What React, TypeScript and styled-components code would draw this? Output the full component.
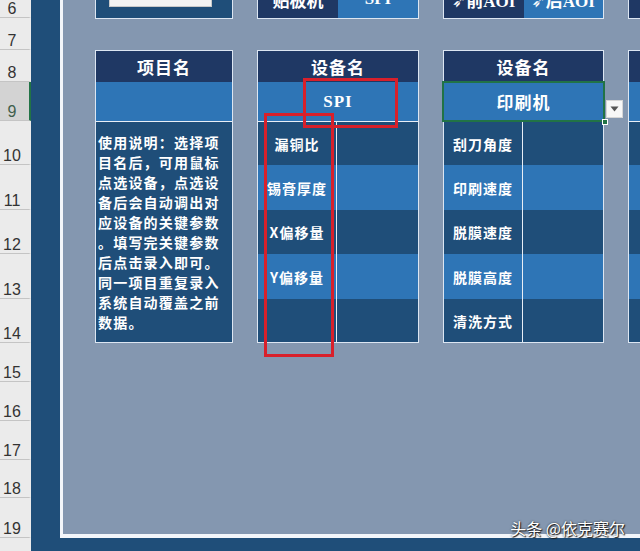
import styled, { createGlobalStyle } from 'styled-components'

const GlobalStyle = createGlobalStyle`
  html, body {
    margin: 0;
    padding: 0;
    width: 640px;
    height: 551px;
    overflow: hidden;
    background: #1f4e79;
  }
  body {
    font-family: "Noto Sans CJK SC", "Noto Sans", sans-serif;
  }
`

const rows = [
  { n: 6, h: 18 },
  { n: 7, h: 32 },
  { n: 8, h: 32 },
  { n: 9, h: 39 },
  { n: 10, h: 44 },
  { n: 11, h: 45 },
  { n: 12, h: 44 },
  { n: 13, h: 45 },
  { n: 14, h: 44 },
  { n: 15, h: 39 },
  { n: 16, h: 39 },
  { n: 17, h: 39 },
  { n: 18, h: 38 },
  { n: 19, h: 40 },
  { n: 20, h: 70 },
]

const guide = [
  '使用说明：选择项',
  '目名后，可用鼠标',
  '点选设备，点选设',
  '备后会自动调出对',
  '应设备的关键参数',
  '。填写完关键参数',
  '后点击录入即可。',
  '同一项目重复录入',
  '系统自动覆盖之前',
  '数据。',
]

const spiParams = ['漏铜比', '锡膏厚度', 'X偏移量', 'Y偏移量', '']
const printerParams = ['刮刀角度', '印刷速度', '脱膜速度', '脱膜高度', '清洗方式']
const paramRowHeights = [43, 45, 44, 45, 43]

export default function App() {
  return (
    <Page>
      <GlobalStyle />
      <RowHeaders>
        {rows.map((r) => (
          <RowHead key={r.n} $h={r.h} $active={r.n === 9}>
            {r.n === 20 ? '' : r.n}
          </RowHead>
        ))}
      </RowHeaders>

      <Sheet>
        <Frame>
          <TopRow>
            <TopPanel $w={138}>
              <InputBox />
            </TopPanel>
            <TopPanel $w={162}>
              <TopCell $tone="navy">贴板机</TopCell>
              <TopCell $tone="mid">SPI</TopCell>
            </TopPanel>
            <TopPanel $w={161}>
              <TopCell $tone="navy">➶前AOI</TopCell>
              <TopCell $tone="mid">➶后AOI</TopCell>
            </TopPanel>
            <TopPanel $w={161}>
              <TopCell $tone="navy" />
              <TopCell $tone="mid" />
            </TopPanel>
          </TopRow>

          <MainRow>
            <Panel $w={138}>
              <PanelHead>项目名</PanelHead>
              <SelectCell />
              <GuideBody>
                {guide.map((line) => (
                  <GuideLine key={line}>{line}</GuideLine>
                ))}
              </GuideBody>
            </Panel>

            <Panel $w={162}>
              <PanelHead>设备名</PanelHead>
              <SelectCell>SPI</SelectCell>
              <ParamBody>
                {spiParams.map((p, i) => (
                  <ParamRow key={i} $h={paramRowHeights[i]} $alt={i % 2 === 1}>
                    <ParamLabel $align="center">{p}</ParamLabel>
                    <ParamValue />
                  </ParamRow>
                ))}
              </ParamBody>
            </Panel>

            <Panel $w={161}>
              <PanelHead>设备名</PanelHead>
              <SelectCell $selected>
                印刷机
                <FillHandle />
                <DropButton>
                  <svg width="9" height="6" viewBox="0 0 9 6">
                    <path d="M0.5 0.5 L8.5 0.5 L4.5 5.5 Z" fill="#555" />
                  </svg>
                </DropButton>
              </SelectCell>
              <ParamBody>
                {printerParams.map((p, i) => (
                  <ParamRow key={p} $h={paramRowHeights[i]} $alt={i % 2 === 1}>
                    <ParamLabel $align="left">{p}</ParamLabel>
                    <ParamValue />
                  </ParamRow>
                ))}
              </ParamBody>
            </Panel>

            <Panel $w={161}>
              <PanelHead />
              <SelectCell />
              <ParamBody>
                {paramRowHeights.map((h, i) => (
                  <ParamRow key={i} $h={h} $alt={i % 2 === 1}>
                    <ParamLabel $align="left" />
                    <ParamValue />
                  </ParamRow>
                ))}
              </ParamBody>
            </Panel>
          </MainRow>
        </Frame>
      </Sheet>

      <Mark $x={303} $y={78} $w={95} $h={50} />
      <Mark $x={264} $y={113} $w={70} $h={244} />
      <Watermark>头条 @依克赛尔</Watermark>
    </Page>
  )
}

const Page = styled.div`
  position: relative;
  display: flex;
  width: 640px;
  height: 551px;
  overflow: hidden;
`

// Excel row headers
const RowHeaders = styled.div`
  width: 31px;
  flex-shrink: 0;
  background: #ebebeb;
  display: flex;
  flex-direction: column;
`

const RowHead = styled.div<{ $h: number; $active?: boolean }>`
  box-sizing: border-box;
  height: ${(p) => p.$h}px;
  flex-shrink: 0;
  display: flex;
  align-items: flex-end;
  justify-content: center;
  padding-right: 5px;
  border-bottom: 1px solid #c4c4c4;
  border-right: 2px solid ${(p) => (p.$active ? '#217346' : '#ebebeb')};
  background: ${(p) => (p.$active ? '#d3d3d3' : '#ebebeb')};
  color: ${(p) => (p.$active ? '#3f5f4c' : '#333')};
  font-family: "Liberation Sans", Arial, sans-serif;
  font-size: 16px;
  line-height: 17px;
`

const Sheet = styled.div`
  flex: 1;
  display: flex;
  flex-direction: column;
  padding: 0 0 13px 29px;
  background: #1f4e79;
`

const Frame = styled.div`
  flex: 1;
  margin-top: -21px;
  padding-left: 32px;
  background: #8497b0;
  border-left: 3px solid #f3f6fa;
  border-bottom: 4px solid #f3f6fa;
  display: flex;
  flex-direction: column;
`

// top strip (row 6, mostly scrolled away)
const TopRow = styled.div`
  display: flex;
  gap: 24px;
  height: 40px;
  flex-shrink: 0;
`

const TopPanel = styled.div<{ $w: number }>`
  box-sizing: border-box;
  width: ${(p) => p.$w}px;
  flex-shrink: 0;
  display: flex;
  background: #1f4e79;
  border: 1px solid #dce6f2;
`

const InputBox = styled.div`
  width: 103px;
  height: 18px;
  margin: 0 0 11px 13px;
  align-self: flex-end;
  box-sizing: border-box;
  background: #f3f3f3;
  border: 1px solid #c9c9c9;
`

const TopCell = styled.div<{ $tone: 'navy' | 'mid' }>`
  flex: 1;
  display: flex;
  align-items: center;
  justify-content: center;
  background: ${(p) => (p.$tone === 'navy' ? '#1f3864' : '#2e75b6')};
  color: #fff;
  font-family: "Liberation Serif", "Noto Sans CJK SC", "DejaVu Sans", serif;
  font-weight: bold;
  font-size: 17px;
  white-space: nowrap;
`

// main panels (rows 8-14)
const MainRow = styled.div`
  display: flex;
  gap: 24px;
  margin-top: 31px;
`

const Panel = styled.div<{ $w: number }>`
  box-sizing: border-box;
  width: ${(p) => p.$w}px;
  height: 293px;
  flex-shrink: 0;
  display: flex;
  flex-direction: column;
  border: 1px solid #dce6f2;
  background: #1f4e79;
`

const PanelHead = styled.div`
  height: 31px;
  flex-shrink: 0;
  display: flex;
  align-items: center;
  justify-content: center;
  background: #1f3864;
  color: #fff;
  font-family: "Liberation Serif", "Noto Sans CJK SC", serif;
  font-weight: bold;
  font-size: 17px;
  letter-spacing: 1px;
`

const SelectCell = styled.div<{ $selected?: boolean }>`
  position: relative;
  box-sizing: border-box;
  height: 39px;
  flex-shrink: 0;
  display: flex;
  align-items: center;
  justify-content: center;
  background: #2e75b6;
  color: #fff;
  font-family: "Liberation Serif", "Noto Sans CJK SC", serif;
  font-weight: bold;
  font-size: 17px;
  letter-spacing: 1px;
  outline: ${(p) => (p.$selected ? '2px solid #217346' : 'none')};
  outline-offset: -1px;
  margin: ${(p) => (p.$selected ? '0 -1px' : '0')};
`

const FillHandle = styled.span`
  position: absolute;
  right: -4px;
  bottom: -4px;
  width: 6px;
  height: 6px;
  background: #217346;
  border: 1px solid #fff;
  box-sizing: border-box;
`

const DropButton = styled.span`
  position: absolute;
  left: calc(100% + 2px);
  top: 18px;
  width: 17px;
  height: 18px;
  box-sizing: border-box;
  display: flex;
  align-items: center;
  justify-content: center;
  background: #f7f7f7;
  border: 1px solid #d6d6d6;
`

const GuideBody = styled.div`
  flex: 1;
  border-top: 1px solid #e8eef6;
  padding: 10px 0 0 2px;
  color: #fff;
  font-size: 14px;
  font-weight: bold;
  line-height: 20px;
  letter-spacing: 1.2px;
`

const GuideLine = styled.div`
  white-space: nowrap;
`

const ParamBody = styled.div`
  flex: 1;
  display: flex;
  flex-direction: column;
  border-top: 1px solid #e8eef6;
`

const ParamRow = styled.div<{ $h: number; $alt: boolean }>`
  height: ${(p) => p.$h}px;
  flex-shrink: 0;
  display: flex;
  background: ${(p) => (p.$alt ? '#2e75b6' : '#1f4e79')};
`

const ParamLabel = styled.div<{ $align: 'center' | 'left' }>`
  width: 79px;
  flex-shrink: 0;
  display: flex;
  align-items: center;
  justify-content: ${(p) => (p.$align === 'center' ? 'center' : 'flex-start')};
  padding-left: ${(p) => (p.$align === 'center' ? '0' : '9px')};
  box-sizing: border-box;
  border-right: 1px solid #e8eef6;
  color: #fff;
  font-size: 14px;
  font-weight: bold;
  letter-spacing: 1px;
  white-space: nowrap;
`

const ParamValue = styled.div`
  flex: 1;
`

// annotation overlays
const Mark = styled.div<{ $x: number; $y: number; $w: number; $h: number }>`
  position: absolute;
  left: ${(p) => p.$x}px;
  top: ${(p) => p.$y}px;
  width: ${(p) => p.$w}px;
  height: ${(p) => p.$h}px;
  box-sizing: border-box;
  border: 3px solid #d8202b;
  pointer-events: none;
`

const Watermark = styled.div`
  position: absolute;
  right: 15px;
  bottom: 13px;
  color: #fff;
  font-size: 16px;
  line-height: 20px;
  text-shadow: 1px 1px 1px #1a1a1a, 0 0 2px #333;
  white-space: nowrap;
`
